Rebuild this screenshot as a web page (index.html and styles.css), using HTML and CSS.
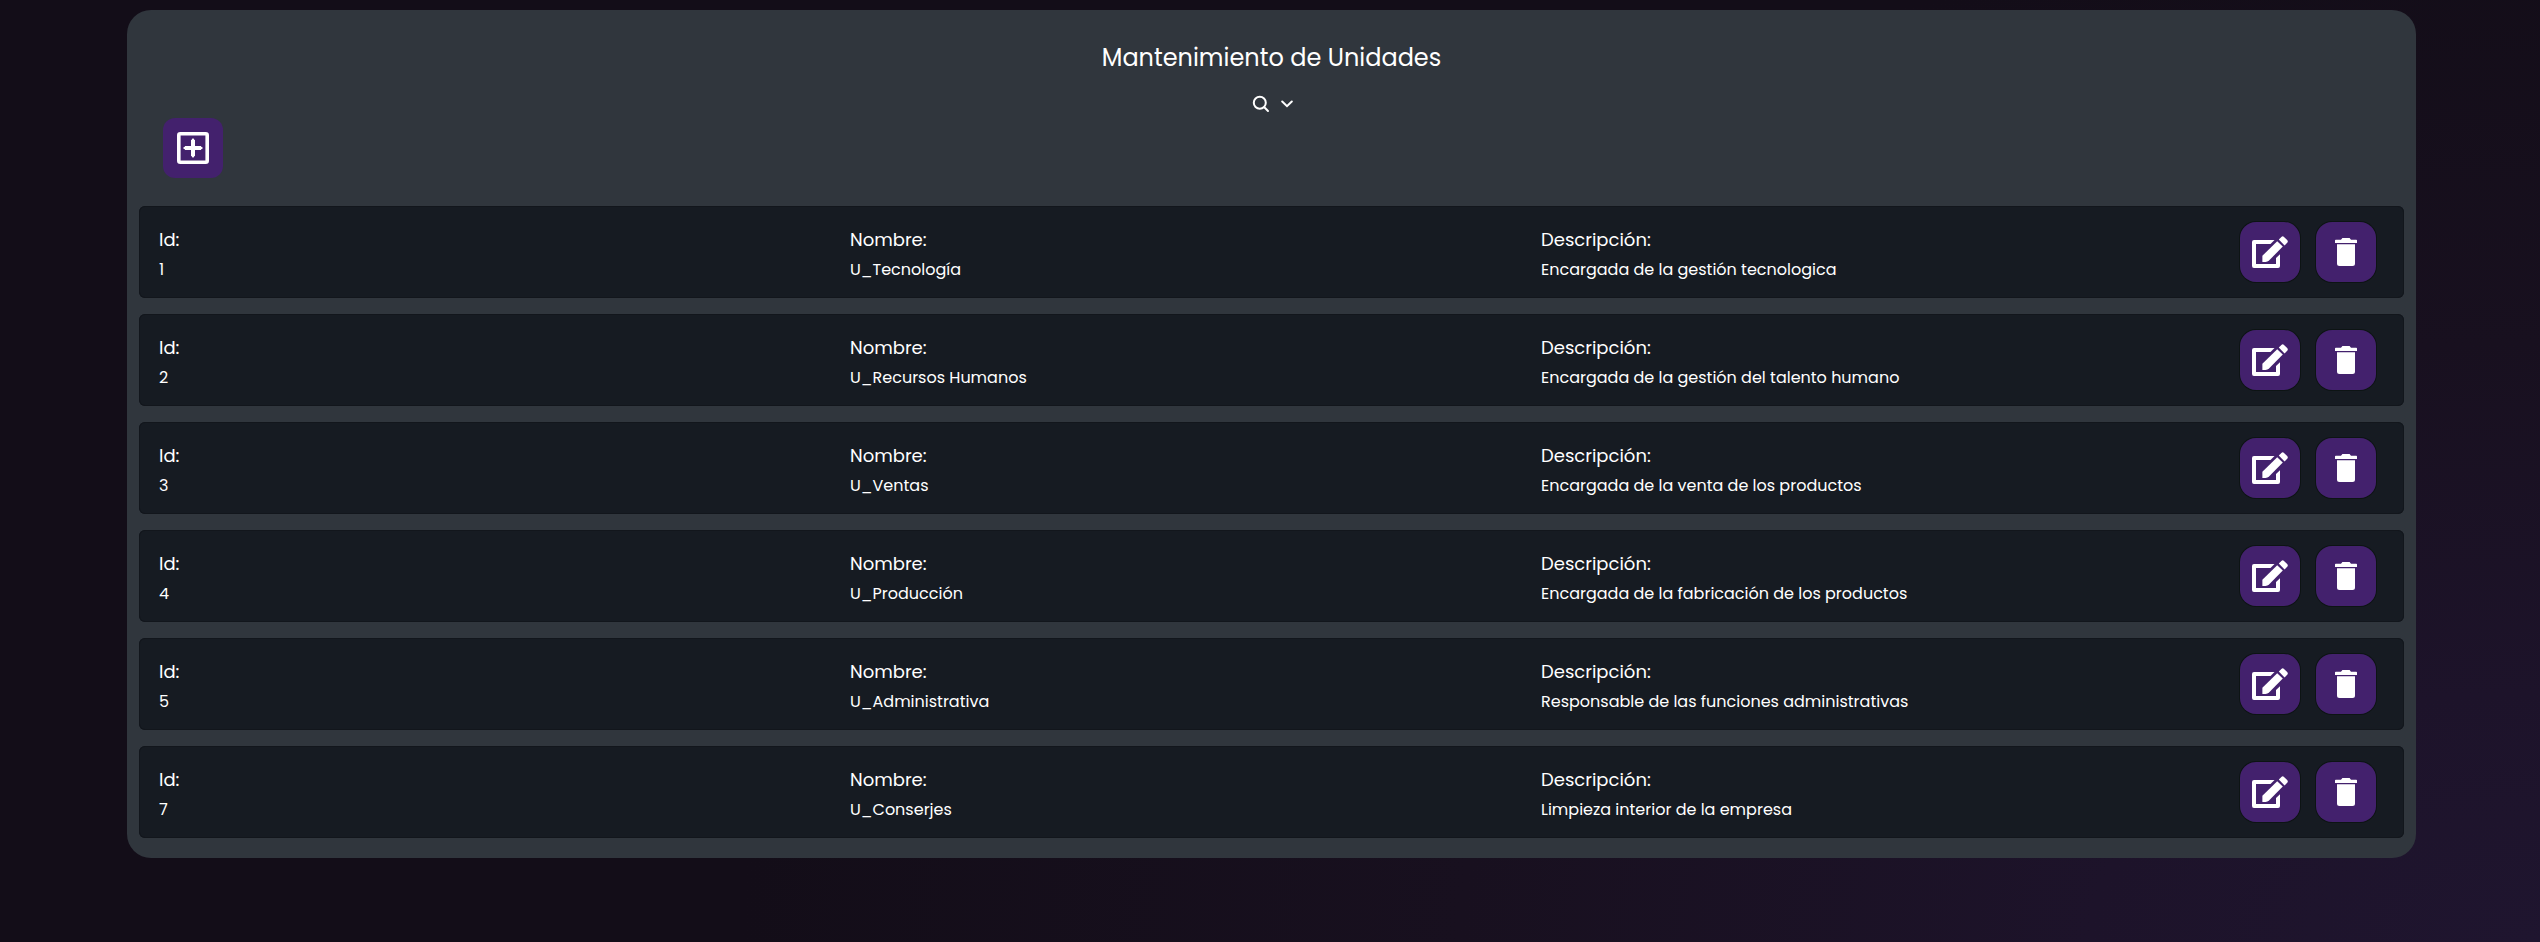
FILE: index.html
```html
<!DOCTYPE html>
<html lang="es">
<head>
<meta charset="utf-8">
<title>Mantenimiento de Unidades</title>
<link rel="stylesheet" href="styles.css">
</head>
<body>
<svg width="0" height="0" class="sprite">
  <symbol id="edit" viewBox="0 0 36 32">
    <path d="M22.5 4H2Q0 4 0 6V30Q0 32 2 32H26Q28 32 28 30V18.3L24 22V28H4V8H18.5Z" fill="currentColor"/>
    <path d="M10.4 26V19.8L25.2 5.2L30.8 10.5L17 24.6Q15.5 26 13.5 26Z" fill="currentColor"/>
    <path d="M26.8 3.6L29.4 .9Q30.7 -.3 32 .9L35.2 4.1Q36.4 5.4 35.2 6.8L32.6 9.4Z" fill="currentColor"/>
  </symbol>
  <symbol id="trash" viewBox="0 0 22 28">
    <path d="M0 2.4Q0 1.7 .8 1.7H6L7.4 0H14.6L16 1.7H21.2Q22 1.7 22 2.4V4.9H0ZM2 6.2H20V25.5Q20 28 17.5 28H4.5Q2 28 2 25.5Z" fill="currentColor"/>
  </symbol>
</svg>
<main class="panel">
  <h1 class="title">Mantenimiento de Unidades</h1>
  <div class="search">
    <svg width="18" height="18" viewBox="0 0 18 18"><g fill="none" stroke="currentColor" stroke-width="2" stroke-linecap="round"><circle cx="7.8" cy="7.8" r="6"/><path d="M12.3 12.3L16 16"/></g></svg>
    <svg width="12" height="8" viewBox="0 0 12 8"><path d="M1.2 1.5L6 6.2L10.8 1.5" fill="none" stroke="currentColor" stroke-width="2" stroke-linecap="round"/></svg>
  </div>
  <button class="btn add" aria-label="Agregar"><svg width="32" height="32" viewBox="0 0 32 32"><rect x="1.8" y="1.8" width="28.4" height="28.4" rx="1.5" fill="none" stroke="currentColor" stroke-width="3.6"/><path d="M16 8V24M8 16H24" stroke="currentColor" stroke-width="4"/><path d="M16 7.7V24.3M7.7 16H24.3" stroke="currentColor" stroke-width="2.6" stroke-linecap="round"/></svg></button>
  <div id="list" class="list"></div>
</main>
<script src="app.js"></script>
</body>
</html>
```
FILE: styles.css
```css
* { box-sizing: border-box; }
html { height: 100%; }
body { margin: 0; min-height: 942px; padding-top: 10px; overflow: hidden; color: #fff; font-family: Poppins, Inter, sans-serif; background: radial-gradient(ellipse 1800px 1000px at 100% 100%, #1f152f 0%, #1d132a 25%, #18101f 60%, #130d18 100%); }
.sprite { position: absolute; }
.panel { width: 2289px; height: 848px; margin-left: 127px; padding: 29px 12px 20px; border-radius: 24px; background: #30363d; display: flex; flex-direction: column; }
.title { margin: 0; text-align: center; font-size: 24px; font-weight: 400; line-height: 37px; }
.search { display: flex; justify-content: center; align-items: center; gap: 11px; height: 42px; padding-top: 14px; padding-left: 2px; }
.btn { display: flex; align-items: center; justify-content: center; width: 60px; height: 60px; padding: 0; border: 0; border-radius: 16px; background: #43216d; color: #fff; }
.add { margin: 0 0 28px 24px; border-radius: 12px; }
.list { display: flex; flex-direction: column; gap: 16px; }
.row { display: grid; grid-template-columns: 691px 691px 1fr auto; height: 92px; padding: 0 28px 0 20px; border-radius: 6px; background: #161b22; box-shadow: inset 0 0 0 1px #12161c; }
.cell { display: flex; flex-direction: column; gap: 3px; padding-top: 20px; white-space: nowrap; }
.label { font-size: 18px; line-height: 27px; }
.value { font-size: 16px; line-height: 27px; }
.actions { display: flex; align-items: center; gap: 16px; }
.actions .btn { box-shadow: 0 0 0 1px #0d1414; }
.edit-icon { width: 36px; height: 32px; overflow: visible; }
.trash-icon { width: 22px; height: 28px; }
```
FILE: app.js
```js
const units = [
  ["1", "U_Tecnología", "Encargada de la gestión tecnologica"],
  ["2", "U_Recursos Humanos", "Encargada de la gestión del talento humano"],
  ["3", "U_Ventas", "Encargada de la venta de los productos"],
  ["4", "U_Producción", "Encargada de la fabricación de los productos"],
  ["5", "U_Administrativa", "Responsable de las funciones administrativas"],
  ["7", "U_Conserjes", "Limpieza interior de la empresa"]
];
const labels = ["Id:", "Nombre:", "Descripción:"];
document.getElementById("list").innerHTML = units.map(u => `<div class="row">${u.map((v, i) => `<div class="cell"><div class="label">${labels[i]}</div><div class="value">${v}</div></div>`).join("")}<div class="actions"><button class="btn" aria-label="Editar"><svg class="edit-icon"><use href="#edit"/></svg></button><button class="btn" aria-label="Eliminar"><svg class="trash-icon"><use href="#trash"/></svg></button></div></div>`).join("");
```
